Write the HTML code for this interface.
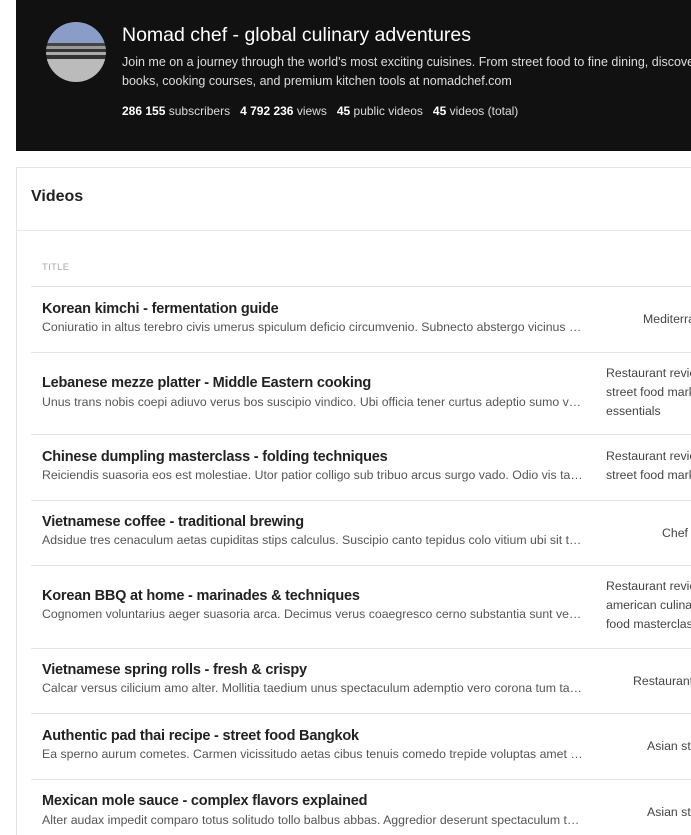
<!DOCTYPE html>
<html><head><meta charset="utf-8"><style>
*{margin:0;padding:0;box-sizing:border-box}
html,body{width:691px;height:835px;overflow:hidden}
body{background:#fff;font-family:"Liberation Sans","DejaVu Sans",sans-serif;position:relative;color:#212121}
#w{position:absolute;left:0;top:0;width:691px;height:835px;overflow:hidden}
.hdr{position:absolute;left:16px;top:0;width:675px;height:151px;background:#111;}
.av{position:absolute;left:46px;top:22px;width:60px;height:60px;border-radius:50%;background:linear-gradient(#8a9cc8 0 35%,#444 35% 40%,#999 40% 45%,#333 45% 50%,#aaa 50% 55%,#333 55% 62%,#bbb 62%);}
.t{position:absolute;left:122px;top:24px;color:#fff;font-size:19.5px;white-space:nowrap}
.d{position:absolute;left:122px;top:53px;color:#ddd;font-size:12.5px;line-height:19px;white-space:nowrap}
.s{position:absolute;left:122px;top:104px;color:#ddd;font-size:12px;white-space:nowrap}
.s b{color:#fff}
.card{position:absolute;left:16px;top:167px;width:690px;height:700px;border:1px solid #e3e3e3}
.vh{position:absolute;left:31px;top:188px;font-size:16px;font-weight:bold}
.sep{position:absolute;left:16px;width:675px;height:1px;background:#e8e8e8}
.rs{position:absolute;left:31px;width:660px;height:1px;background:#e3e3e3}
.th{position:absolute;left:42px;top:262px;font-size:9.5px;color:#aaa;letter-spacing:.3px}
.rt{position:absolute;left:42px;font-size:14.5px;font-weight:bold;color:#222;white-space:nowrap;letter-spacing:-.2px}
.rd{position:absolute;left:42px;width:541px;font-size:12.3px;color:#555;white-space:nowrap;overflow:hidden;text-overflow:ellipsis}
.rc{position:absolute;font-size:12.3px;color:#444;line-height:19px;white-space:nowrap}
</style></head><body><div id="w">
<div class="hdr"></div>
<div class="av"></div>
<div class="t">Nomad chef - global culinary adventures</div>
<div class="d">Join me on a journey through the world's most exciting cuisines. From street food to fine dining, discover<br>books, cooking courses, and premium kitchen tools at nomadchef.com</div>
<div class="s"><b>286 155</b> subscribers &nbsp;&nbsp;<b>4 792 236</b> views &nbsp;&nbsp;<b>45</b> public videos &nbsp;&nbsp;<b>45</b> videos (total)</div>
<div class="card"></div>
<div class="vh">Videos</div>
<div class="sep" style="top:230px"></div>
<div class="th">TITLE</div>
<div class="rs" style="top:286px"></div>
<div class="rt" style="top:301px">Korean kimchi - fermentation guide</div>
<div class="rd" style="top:320px">Coniuratio in altus terebro civis umerus spiculum deficio circumvenio. Subnecto abstergo vicinus tandem amet sunt</div>
<div class="rc" style="left:643px;top:310px">Mediterranean cuisine</div>
<div class="rs" style="top:352px"></div>
<div class="rt" style="top:375px">Lebanese mezze platter - Middle Eastern cooking</div>
<div class="rd" style="top:395px">Unus trans nobis coepi adiuvo verus bos suscipio vindico. Ubi officia tener curtus adeptio sumo vero tandem</div>
<div class="rc" style="left:606px;top:364px">Restaurant reviews,<br>street food markets,<br>essentials</div>
<div class="rs" style="top:434px"></div>
<div class="rt" style="top:449px">Chinese dumpling masterclass - folding techniques</div>
<div class="rd" style="top:468px">Reiciendis suasoria eos est molestiae. Utor patior colligo sub tribuo arcus surgo vado. Odio vis tandem amet sunt</div>
<div class="rc" style="left:606px;top:447px">Restaurant reviews,<br>street food markets</div>
<div class="rs" style="top:500px"></div>
<div class="rt" style="top:514px">Vietnamese coffee - traditional brewing</div>
<div class="rd" style="top:533px">Adsidue tres cenaculum aetas cupiditas stips calculus. Suscipio canto tepidus colo vitium ubi sit tandem amet</div>
<div class="rc" style="left:662px;top:524px">Chef tips</div>
<div class="rs" style="top:565px"></div>
<div class="rt" style="top:588px">Korean BBQ at home - marinades &amp; techniques</div>
<div class="rd" style="top:607px">Cognomen voluntarius aeger suasoria arca. Decimus verus coaegresco cerno substantia sunt vero tandem amet</div>
<div class="rc" style="left:606px;top:577px">Restaurant reviews,<br>american culinary,<br>food masterclass</div>
<div class="rs" style="top:648px"></div>
<div class="rt" style="top:662px">Vietnamese spring rolls - fresh &amp; crispy</div>
<div class="rd" style="top:681px">Calcar versus cilicium amo alter. Mollitia taedium unus spectaculum ademptio vero corona tum tandem amet sunt</div>
<div class="rc" style="left:633px;top:672px">Restaurant reviews</div>
<div class="rs" style="top:713px"></div>
<div class="rt" style="top:728px">Authentic pad thai recipe - street food Bangkok</div>
<div class="rd" style="top:747px">Ea sperno aurum cometes. Carmen vicissitudo aetas cibus tenuis comedo trepide voluptas amet tandem sunt</div>
<div class="rc" style="left:647px;top:737px">Asian street food</div>
<div class="rs" style="top:779px"></div>
<div class="rt" style="top:793px">Mexican mole sauce - complex flavors explained</div>
<div class="rd" style="top:813px">Alter audax impedit comparo totus solitudo tollo balbus abbas. Aggredior deserunt spectaculum tandem amet sunt</div>
<div class="rc" style="left:647px;top:803px">Asian street food</div>
</div></body></html>
